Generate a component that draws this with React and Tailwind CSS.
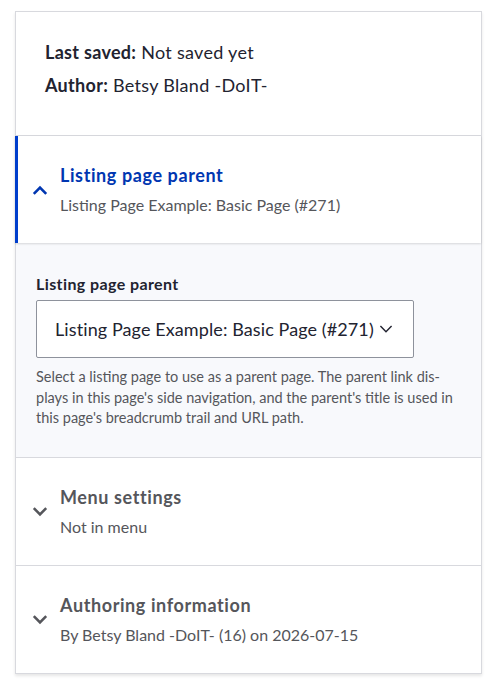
function ChevronUp({ className }) {
  return (
    <svg viewBox="0 0 16 10" className={className} fill="none" stroke="currentColor" strokeWidth="2.6">
      <path d="M1.8 8.8 L8 2.6 L14.2 8.8" />
    </svg>
  );
}
function ChevronDown({ className, sw = "2.6" }) {
  return (
    <svg viewBox="0 0 16 10" className={className} fill="none" stroke="currentColor" strokeWidth={sw}>
      <path d="M1.8 1.2 L8 7.4 L14.2 1.2" />
    </svg>
  );
}

function Summary({ title, sub, open }) {
  return (
    <div
      className={
        "flex items-center pt-[25px] pb-[24px] " +
        (open
          ? "-ml-px border-l-[3px] border-[#003ecc] pl-[14px] shadow-[0_1px_2px_rgba(0,0,0,0.14)] relative z-10 bg-white"
          : "pl-[16px]")
      }
    >
      {open ? (
        <ChevronUp className="w-[16px] h-[10px] text-[#0036b1] shrink-0" />
      ) : (
        <ChevronDown className="w-[16px] h-[10px] text-[#55565b] shrink-0" />
      )}
      <div className="ml-[12px]">
        <div
          className={
            "text-[18px] leading-[29px] font-bold tracking-[0.6px] " + (open ? "text-[#0036b1]" : "text-[#55565b]")
          }
        >
          {title}
        </div>
        <div className="text-[16px] leading-[29px] text-[#55565b]">{sub}</div>
      </div>
    </div>
  );
}

export default function App() {
  return (
    <div className="w-[500px] h-[692px] bg-white pt-[11px] pl-[15px]" style={{ fontFamily: "Lato, sans-serif" }}>
      <div className="w-[467px] border border-[#d8d9de] shadow-[0_2px_3px_rgba(0,0,0,0.1)] text-[#222330]">
        <div className="pl-[29px] pt-[24px] pb-[33px] text-[18px] leading-[33px] tracking-[0.3px]">
          <div>
            <span className="font-bold">Last saved:</span> Not saved yet
          </div>
          <div>
            <span className="font-bold">Author:</span> Betsy Bland -DoIT-
          </div>
        </div>
        <div className="border-t border-[#d8d9de]">
          <Summary open title="Listing page parent" sub="Listing Page Example: Basic Page (#271)" />
          <div className="bg-[#f8f9fc] pl-[20px] pr-[20px] pt-[31px] pb-[28px]">
            <div className="text-[16px] leading-[20px] font-bold tracking-[0.4px] text-[#222330]">Listing page parent</div>
            <div className="mt-[6px] w-[378px] h-[58px] border border-[#8e929c] rounded-[2px] bg-white flex items-center pl-[18px] text-[18px] tracking-[0.1px] text-[#222330]">
              <span>Listing Page Example: Basic Page (#271)</span>
              <ChevronDown sw="1.6" className="ml-[4px] w-[16px] h-[9px] text-[#222330]" />
            </div>
            <div className="mt-[9px] text-[14.5px] leading-[20.5px] text-[#55565b]">
              Select a listing page to use as a parent page. The parent link dis-
              <br />
              plays in this page's side navigation, and the parent's title is used in
              <br />
              this page's breadcrumb trail and URL path.
            </div>
          </div>
        </div>
        <div className="border-t border-[#d8d9de]">
          <Summary title="Menu settings" sub="Not in menu" />
        </div>
        <div className="border-t border-[#d8d9de]">
          <Summary title="Authoring information" sub="By Betsy Bland -DoIT- (16) on 2026-07-15" />
        </div>
      </div>
    </div>
  );
}
